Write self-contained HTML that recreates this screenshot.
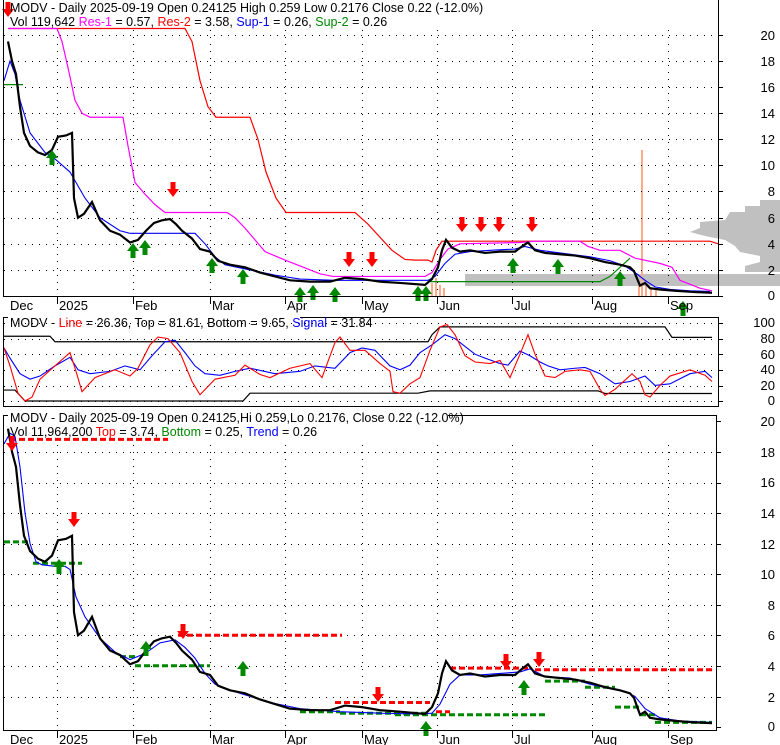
<!DOCTYPE html>
<html><head><meta charset="utf-8"><style>
html,body{margin:0;padding:0;background:#fff;width:780px;height:745px;overflow:hidden}
svg{display:block;font-family:"Liberation Sans",sans-serif}
.ax{font-size:13px;fill:#000}
.hd{font-size:12.5px}
</style></head><body>
<svg width="780" height="745" viewBox="0 0 780 745">
<defs>
<g id="up"><polygon points="0,-7 -6,1 -2.5,1 -2.5,8 2.5,8 2.5,1 6,1" fill="#080"/></g>
<g id="dn"><polygon points="0,7 -6,-1 -2.5,-1 -2.5,-8 2.5,-8 2.5,-1 6,-1" fill="#f00"/></g>
</defs>
<!-- ========== PANEL 1 ========== -->
<rect x="465" y="274" width="315" height="12" fill="#c0c0c0"/>
<path d="M780,200 L760,200 L760,206 L745,206 L745,212 L730,212 L725,220 L700,222 L700,228 L690,232 L705,236 L725,240 L735,246 L740,252 L760,256 L760,262 L745,266 L745,272 L780,272Z" fill="#c0c0c0"/>
<g fill="#ffaa88">
<rect x="431" y="283" width="2" height="13"/><rect x="435" y="278" width="2" height="18"/><rect x="439" y="285" width="2" height="11"/><rect x="443" y="288" width="2" height="8"/>
<rect x="641" y="150" width="2" height="146"/><rect x="638" y="285" width="2" height="11"/><rect x="645" y="285" width="2" height="11"/><rect x="650" y="288" width="2" height="8"/><rect x="655" y="290" width="2" height="6"/>
</g>
<g stroke="#000" stroke-width="1" stroke-dasharray="1,6">
<line x1="4" x2="718" y1="35.5" y2="35.5"/><line x1="4" x2="718" y1="61.5" y2="61.5"/><line x1="4" x2="718" y1="87.5" y2="87.5"/><line x1="4" x2="718" y1="113.5" y2="113.5"/><line x1="4" x2="718" y1="139.5" y2="139.5"/><line x1="4" x2="718" y1="165.5" y2="165.5"/><line x1="4" x2="718" y1="191.5" y2="191.5"/><line x1="4" x2="718" y1="218.5" y2="218.5"/><line x1="4" x2="718" y1="244.5" y2="244.5"/><line x1="4" x2="718" y1="270.5" y2="270.5"/>
<line x1="57.5" x2="57.5" y1="30" y2="296"/><line x1="133.5" x2="133.5" y1="30" y2="296"/><line x1="210.5" x2="210.5" y1="30" y2="296"/><line x1="285.5" x2="285.5" y1="30" y2="296"/><line x1="362.5" x2="362.5" y1="30" y2="296"/><line x1="437.5" x2="437.5" y1="30" y2="296"/><line x1="512.5" x2="512.5" y1="30" y2="296"/><line x1="592.5" x2="592.5" y1="30" y2="296"/><line x1="668.5" x2="668.5" y1="30" y2="296"/>
</g>
<g transform="translate(0,296) scale(1,-13.05)" fill="none">
<polyline vector-effect="non-scaling-stroke" stroke="#f00" stroke-width="1.2" points="8,20.5 185,20.5 192,19.5 200,16.5 208,14.5 216,13.7 250,13.7 258,12 266,9.5 276,7.5 286,6.4 355,6.4 368,5.5 380,4.5 392,3.5 405,2.8 415,2.75 428,2.75 432,2.6 436,3.5 442,4.2 710,4.2 718,4.0"/>
<polyline vector-effect="non-scaling-stroke" stroke="#f0f" stroke-width="1.2" points="8,20.5 57,20.5 62,19.5 68,17.5 75,15 82,14 90,13.7 123,13.7 128,11.5 135,8.7 145,7.8 155,7 165,6.4 227,6.4 235,6 245,5.2 255,4.3 265,3.4 285,2.75 300,2.3 320,1.7 333,1.5 425,1.5 432,1.8 440,2.8 448,3.6 460,4.0 520,4.1 535,4.2 580,4.2 588,3.8 600,3.5 620,3.5 635,2.9 660,2.5 672,2.2 680,1.2 700,0.6 712,0.4"/>
<polyline vector-effect="non-scaling-stroke" stroke="#080" stroke-width="1.2" points="4,16.2 23,16.2"/>
<polyline vector-effect="non-scaling-stroke" stroke="#080" stroke-width="1.2" points="430,1.1 600,1.1 610,1.5 620,2.2 630,2.9"/>
<polyline vector-effect="non-scaling-stroke" stroke="#00f" stroke-width="1.1" points="4,16.5 10,18 15,17 20,15 30,12.5 45,11 55,10.5 70,9.5 85,7.5 100,6 120,5 130,4.8 195,4.8 205,4 215,3 225,2.4 250,2 275,1.6 300,1.3 335,1.2 420,1.2 428,1.2 435,1.5 445,2.5 455,3.2 470,3.4 490,3.5 515,3.6 525,3.8 540,3.5 560,3.3 590,3.0 610,2.7 625,2.3 635,1.8 645,1.2 655,0.7 670,0.5 690,0.4 710,0.35"/>
<polyline vector-effect="non-scaling-stroke" stroke="#000" stroke-width="2.2" points="8,19.5 12,18 16,17 20,14.5 24,12.5 30,11.5 38,11 45,10.8 52,11.2 58,12.2 66,12.3 72,12.5 74,7.5 78,6 84,6.3 92,7.2 100,5.8 110,5.0 120,4.7 130,4.1 138,4.3 146,5 154,5.6 162,5.8 170,5.9 176,5.5 182,5.0 192,4.4 200,3.6 210,3.4 218,2.7 230,2.4 245,2.2 260,1.8 275,1.5 290,1.2 310,1.1 330,1.1 345,1.4 362,1.3 380,1.1 400,1.0 425,0.85 432,1.3 438,2.2 442,3.5 446,4.3 452,3.7 460,3.4 470,3.5 485,3.3 500,3.4 515,3.4 522,3.8 528,4.1 535,3.5 545,3.3 560,3.2 575,3.1 590,2.9 605,2.6 620,2.4 630,2.2 634,1.9 640,0.8 645,1.0 650,0.6 660,0.5 675,0.4 695,0.3 712,0.25"/>
</g>
<use href="#dn" x="8" y="10"/><use href="#up" x="52" y="157"/><use href="#up" x="133" y="250"/><use href="#up" x="145" y="247"/><use href="#dn" x="173" y="190"/><use href="#up" x="212" y="265"/><use href="#up" x="243" y="276"/><use href="#up" x="300" y="294"/><use href="#up" x="313" y="292"/><use href="#up" x="335" y="294"/><use href="#dn" x="349" y="260"/><use href="#dn" x="372" y="260"/><use href="#up" x="418" y="293"/><use href="#up" x="426" y="293"/><use href="#dn" x="462" y="225"/><use href="#dn" x="481" y="225"/><use href="#dn" x="499" y="225"/><use href="#dn" x="532" y="225"/><use href="#up" x="513" y="265"/><use href="#up" x="558" y="266"/><use href="#up" x="620" y="278"/><use href="#up" x="683" y="308"/>
<path d="M3.5,0 V296.5 H718.5 V0" fill="none" stroke="#000"/>
<g stroke="#000"><line x1="718" x2="723" y1="35.5" y2="35.5"/><line x1="718" x2="723" y1="61.5" y2="61.5"/><line x1="718" x2="723" y1="87.5" y2="87.5"/><line x1="718" x2="723" y1="113.5" y2="113.5"/><line x1="718" x2="723" y1="139.5" y2="139.5"/><line x1="718" x2="723" y1="165.5" y2="165.5"/><line x1="718" x2="723" y1="191.5" y2="191.5"/><line x1="718" x2="723" y1="218.5" y2="218.5"/><line x1="718" x2="723" y1="244.5" y2="244.5"/><line x1="718" x2="723" y1="270.5" y2="270.5"/><line x1="718" x2="723" y1="296.5" y2="296.5"/></g>
<g class="ax" text-anchor="end">
<text x="775" y="40">20</text><text x="775" y="66">18</text><text x="775" y="92">16</text><text x="775" y="118">14</text><text x="775" y="144">12</text><text x="775" y="170">10</text><text x="775" y="196">8</text><text x="775" y="223">6</text><text x="775" y="249">4</text><text x="775" y="275">2</text><text x="775" y="300">0</text>
</g>
<text class="hd" x="10" y="12">MODV - Daily 2025-09-19 Open 0.24125  High 0.259  Low 0.2176  Close 0.22 (-12.0%)</text>
<text class="hd" x="10" y="26">Vol 119,642 <tspan fill="#f0f">Res-1</tspan> = 0.57, <tspan fill="#f00">Res-2</tspan> = 3.58, <tspan fill="#00f">Sup-1</tspan> = 0.26, <tspan fill="#080">Sup-2</tspan> = 0.26</text>
<g stroke="#000"><line x1="57.5" x2="57.5" y1="297" y2="304"/><line x1="133.5" x2="133.5" y1="297" y2="304"/><line x1="210.5" x2="210.5" y1="297" y2="304"/><line x1="285.5" x2="285.5" y1="297" y2="304"/><line x1="362.5" x2="362.5" y1="297" y2="304"/><line x1="437.5" x2="437.5" y1="297" y2="304"/><line x1="512.5" x2="512.5" y1="297" y2="304"/><line x1="592.5" x2="592.5" y1="297" y2="304"/><line x1="668.5" x2="668.5" y1="297" y2="304"/></g>
<g class="ax"><text x="10" y="310">Dec</text><text x="59" y="310">2025</text><text x="135" y="310">Feb</text><text x="212" y="310">Mar</text><text x="287" y="310">Apr</text><text x="364" y="310">May</text><text x="439" y="310">Jun</text><text x="514" y="310">Jul</text><text x="594" y="310">Aug</text><text x="670" y="310">Sep</text></g>

<!-- ========== PANEL 2 ========== -->
<g stroke="#000" stroke-dasharray="1,6">
<line x1="4" x2="718" y1="339.5" y2="339.5"/><line x1="4" x2="718" y1="354.5" y2="354.5"/><line x1="4" x2="718" y1="370.5" y2="370.5"/><line x1="4" x2="718" y1="386.5" y2="386.5"/><line x1="4" x2="718" y1="323.5" y2="323.5"/><line x1="4" x2="718" y1="401.5" y2="401.5"/>
</g>
<g transform="translate(0,401) scale(1,-0.78)" fill="none">
<polyline vector-effect="non-scaling-stroke" stroke="#000" stroke-width="1.2" points="4,83 50,83 55,76 428,76 432,85 440,95 665,95 672,81.6 712,81.6"/>
<polyline vector-effect="non-scaling-stroke" stroke="#000" stroke-width="1.2" points="4,14 15,14 25,0 243,0 250,10 418,10 430,13 598,13 605,9.65 712,9.65"/>
<polyline vector-effect="non-scaling-stroke" stroke="#00f" stroke-width="1.1" points="4,68 10,55 20,35 30,28 40,32 55,45 70,56 78,40 90,35 110,38 125,45 140,40 152,58 165,76 175,78 185,62 195,45 205,35 220,33 235,38 250,42 275,35 300,38 315,45 335,42 350,62 362,68 375,65 390,45 400,40 410,46 420,62 432,72 445,85 455,80 465,70 475,60 485,55 500,48 508,46 520,64 530,58 540,50 548,45 560,40 575,42 585,43 600,35 615,22 630,25 645,32 655,20 670,22 690,35 705,38 712,30"/>
<polyline vector-effect="non-scaling-stroke" stroke="#f00" stroke-width="1.1" points="4,68 10,45 18,10 25,0 32,5 40,28 55,45 70,62 76,38 82,12 95,30 115,40 130,32 138,42 150,72 158,82 168,80 180,62 192,25 200,8 215,28 235,33 245,46 260,34 270,30 290,42 310,48 322,30 335,75 340,82 350,65 365,65 380,48 390,38 393,12 400,10 410,22 420,30 430,65 440,95 447,98 455,85 465,58 475,50 490,48 500,52 510,30 520,60 528,85 535,60 545,32 555,30 565,38 580,40 590,38 600,15 605,7 615,15 632,35 640,25 645,8 650,5 660,20 670,32 690,40 705,33 712,25"/>
</g>
<path d="M3.5,317.5 H718.5 V406.5 H3.5 Z" fill="none" stroke="#000"/>
<rect x="8" y="316" width="292" height="3" fill="#fff"/>
<g stroke="#000"><line x1="718" x2="723" y1="323.5" y2="323.5"/><line x1="718" x2="723" y1="339.5" y2="339.5"/><line x1="718" x2="723" y1="354.5" y2="354.5"/><line x1="718" x2="723" y1="370.5" y2="370.5"/><line x1="718" x2="723" y1="386.5" y2="386.5"/><line x1="718" x2="723" y1="401.5" y2="401.5"/></g>
<g class="ax" text-anchor="end"><text x="775" y="327">100</text><text x="775" y="343">80</text><text x="775" y="359">60</text><text x="775" y="374">40</text><text x="775" y="390">20</text><text x="775" y="405">0</text></g>
<text class="hd" x="10" y="327">MODV - <tspan fill="#f00">Line</tspan> = 26.36, Top = 81.61, Bottom = 9.65, <tspan fill="#00f">Signal</tspan> = 31.84</text>

<!-- ========== PANEL 3 ========== -->
<g stroke="#000" stroke-dasharray="1,6">
<line x1="4" x2="716" y1="452.5" y2="452.5"/><line x1="4" x2="716" y1="483.5" y2="483.5"/><line x1="4" x2="716" y1="513.5" y2="513.5"/><line x1="4" x2="716" y1="544.5" y2="544.5"/><line x1="4" x2="716" y1="574.5" y2="574.5"/><line x1="4" x2="716" y1="605.5" y2="605.5"/><line x1="4" x2="716" y1="635.5" y2="635.5"/><line x1="4" x2="716" y1="666.5" y2="666.5"/><line x1="4" x2="716" y1="697.5" y2="697.5"/>
<line x1="57.5" x2="57.5" y1="445" y2="730"/><line x1="133.5" x2="133.5" y1="445" y2="730"/><line x1="210.5" x2="210.5" y1="445" y2="730"/><line x1="285.5" x2="285.5" y1="445" y2="730"/><line x1="362.5" x2="362.5" y1="445" y2="730"/><line x1="437.5" x2="437.5" y1="445" y2="730"/><line x1="512.5" x2="512.5" y1="445" y2="730"/><line x1="592.5" x2="592.5" y1="445" y2="730"/><line x1="668.5" x2="668.5" y1="445" y2="730"/>
</g>
<g transform="translate(0,727) scale(1,-15.3)" fill="none">
<g stroke="#f00" stroke-width="3" stroke-dasharray="6,3">
<line vector-effect="non-scaling-stroke" x1="10" x2="168" y1="18.8" y2="18.8"/>
<line vector-effect="non-scaling-stroke" x1="178" x2="342" y1="6.0" y2="6.0"/>
<line vector-effect="non-scaling-stroke" x1="335" x2="430" y1="1.6" y2="1.6"/>
<line vector-effect="non-scaling-stroke" x1="436" x2="450" y1="1.0" y2="1.0"/>
<line vector-effect="non-scaling-stroke" x1="450" x2="530" y1="3.85" y2="3.85"/>
<line vector-effect="non-scaling-stroke" x1="535" x2="712" y1="3.74" y2="3.74"/>
</g>
<g stroke="#080" stroke-width="3" stroke-dasharray="6,3">
<line vector-effect="non-scaling-stroke" x1="4" x2="30" y1="12.1" y2="12.1"/>
<line vector-effect="non-scaling-stroke" x1="33" x2="82" y1="10.7" y2="10.7"/>
<line vector-effect="non-scaling-stroke" x1="120" x2="135" y1="4.6" y2="4.6"/>
<line vector-effect="non-scaling-stroke" x1="135" x2="210" y1="4.0" y2="4.0"/>
<line vector-effect="non-scaling-stroke" x1="300" x2="340" y1="1.0" y2="1.0"/>
<line vector-effect="non-scaling-stroke" x1="340" x2="430" y1="0.9" y2="0.9"/>
<line vector-effect="non-scaling-stroke" x1="395" x2="545" y1="0.8" y2="0.8"/>
<line vector-effect="non-scaling-stroke" x1="545" x2="585" y1="3.0" y2="3.0"/>
<line vector-effect="non-scaling-stroke" x1="585" x2="615" y1="2.6" y2="2.6"/>
<line vector-effect="non-scaling-stroke" x1="615" x2="640" y1="1.3" y2="1.3"/>
<line vector-effect="non-scaling-stroke" x1="640" x2="655" y1="0.8" y2="0.8"/>
<line vector-effect="non-scaling-stroke" x1="655" x2="712" y1="0.3" y2="0.3"/>
</g>
<polyline vector-effect="non-scaling-stroke" stroke="#00f" stroke-width="1.1" points="4,18.5 10,19.2 15,19 20,17 25,14 30,12 36,10.8 42,10.6 55,10.5 65,10.5 70,10.3 76,8.5 85,7.2 100,5.8 115,4.9 130,4.4 145,4.8 160,5.5 175,5.7 185,5.2 195,4.5 205,3.5 215,2.8 230,2.4 250,2.0 270,1.6 300,1.2 340,1.0 380,0.9 420,0.85 432,0.9 440,1.5 450,2.8 460,3.4 480,3.4 500,3.5 520,3.6 530,3.8 545,3.3 570,3.2 590,2.8 610,2.5 625,2.3 635,2.0 645,1.2 660,0.6 680,0.4 712,0.3"/>
<polyline vector-effect="non-scaling-stroke" stroke="#000" stroke-width="2.2" points="8,19.5 12,18 16,17 20,14.5 24,12.5 30,11.5 38,11 45,10.8 52,11.2 58,12.2 66,12.3 72,12.5 74,7.5 78,6 84,6.3 92,7.2 100,5.8 110,5.0 120,4.7 130,4.1 138,4.3 146,5 154,5.6 162,5.8 170,5.9 176,5.5 182,5.0 192,4.4 200,3.6 210,3.4 218,2.7 230,2.4 245,2.2 260,1.8 275,1.5 290,1.2 310,1.1 330,1.1 345,1.4 362,1.3 380,1.1 400,1.0 425,0.85 432,1.3 438,2.2 442,3.5 446,4.3 452,3.7 460,3.4 470,3.5 485,3.3 500,3.4 515,3.4 522,3.8 528,4.1 535,3.5 545,3.3 560,3.2 575,3.1 590,2.9 605,2.6 620,2.4 630,2.2 634,1.9 640,0.8 645,1.0 650,0.6 660,0.5 675,0.4 695,0.3 712,0.25"/>
</g>
<use href="#dn" x="12" y="444"/><use href="#dn" x="74" y="520"/><use href="#up" x="59" y="566"/><use href="#up" x="146" y="648"/><use href="#dn" x="183" y="632"/><use href="#up" x="243" y="668"/><use href="#dn" x="378" y="695"/><use href="#up" x="426" y="728"/><use href="#dn" x="506" y="662"/><use href="#dn" x="539" y="660"/><use href="#up" x="524" y="687"/>
<path d="M3.5,415.5 H716.5 V730.5 H3.5 Z" fill="none" stroke="#000"/>
<rect x="8" y="414" width="440" height="3" fill="#fff"/>
<g stroke="#000"><line x1="716" x2="721" y1="421.5" y2="421.5"/><line x1="716" x2="721" y1="452.5" y2="452.5"/><line x1="716" x2="721" y1="483.5" y2="483.5"/><line x1="716" x2="721" y1="513.5" y2="513.5"/><line x1="716" x2="721" y1="544.5" y2="544.5"/><line x1="716" x2="721" y1="574.5" y2="574.5"/><line x1="716" x2="721" y1="605.5" y2="605.5"/><line x1="716" x2="721" y1="635.5" y2="635.5"/><line x1="716" x2="721" y1="666.5" y2="666.5"/><line x1="716" x2="721" y1="697.5" y2="697.5"/><line x1="716" x2="721" y1="727.5" y2="727.5"/></g>
<g class="ax" text-anchor="end">
<text x="775" y="426">20</text><text x="775" y="457">18</text><text x="775" y="487">16</text><text x="775" y="518">14</text><text x="775" y="549">12</text><text x="775" y="579">10</text><text x="775" y="610">8</text><text x="775" y="640">6</text><text x="775" y="671">4</text><text x="775" y="702">2</text><text x="775" y="731">0</text>
</g>
<text class="hd" x="10" y="422">MODV - Daily 2025-09-19 Open 0.24125,Hi 0.259,Lo 0.2176, Close 0.22 (-12.0%)</text>
<text class="hd" x="10" y="436">Vol 11,964,200 <tspan fill="#f00">Top</tspan> = 3.74, <tspan fill="#080">Bottom</tspan> = 0.25, <tspan fill="#00f">Trend</tspan> = 0.26</text>
<g stroke="#000"><line x1="57.5" x2="57.5" y1="731" y2="738"/><line x1="133.5" x2="133.5" y1="731" y2="738"/><line x1="210.5" x2="210.5" y1="731" y2="738"/><line x1="285.5" x2="285.5" y1="731" y2="738"/><line x1="362.5" x2="362.5" y1="731" y2="738"/><line x1="437.5" x2="437.5" y1="731" y2="738"/><line x1="512.5" x2="512.5" y1="731" y2="738"/><line x1="592.5" x2="592.5" y1="731" y2="738"/><line x1="668.5" x2="668.5" y1="731" y2="738"/></g>
<g class="ax"><text x="10" y="744">Dec</text><text x="59" y="744">2025</text><text x="135" y="744">Feb</text><text x="212" y="744">Mar</text><text x="287" y="744">Apr</text><text x="364" y="744">May</text><text x="439" y="744">Jun</text><text x="514" y="744">Jul</text><text x="594" y="744">Aug</text><text x="670" y="744">Sep</text></g>
</svg>
</body></html>
